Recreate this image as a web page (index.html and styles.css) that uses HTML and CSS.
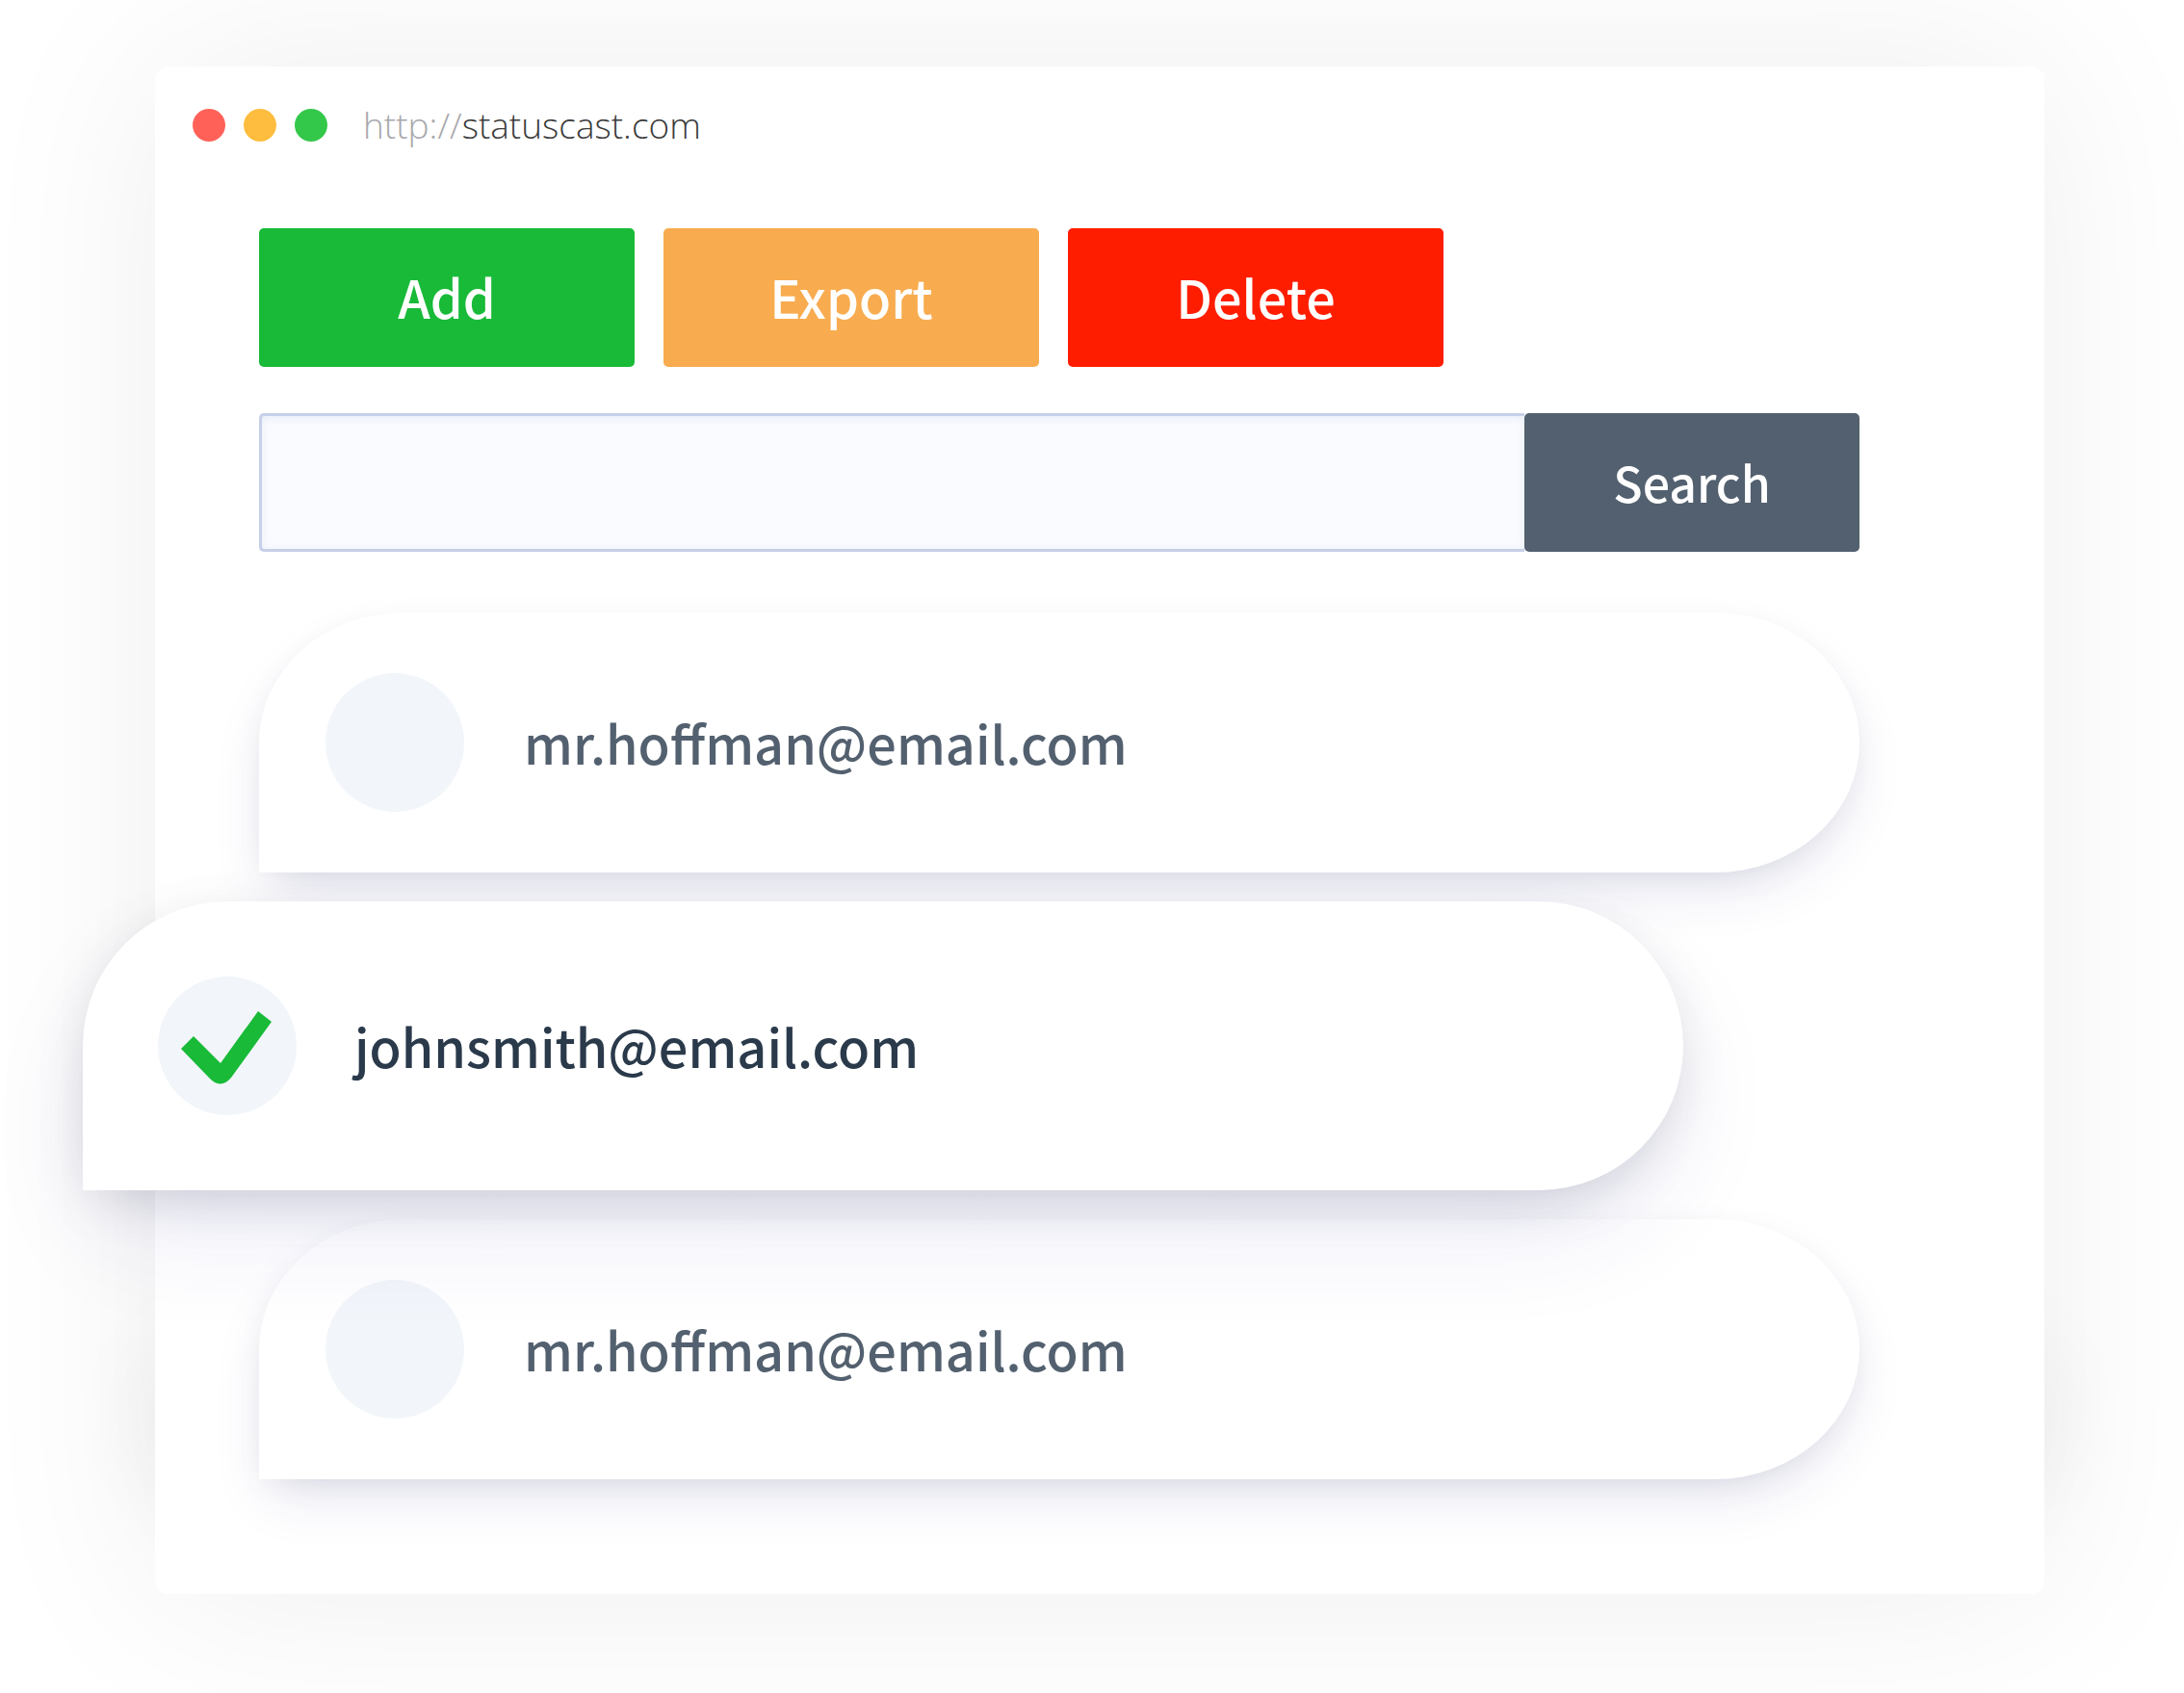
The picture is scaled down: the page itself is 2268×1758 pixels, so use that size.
FILE: index.html
```html
<!DOCTYPE html>
<html lang="en">
<head>
<meta charset="utf-8">
<meta name="viewport" content="width=device-width, initial-scale=1">
<title>StatusCast subscribers</title>
<link rel="stylesheet" href="styles.css">
</head>
<body>
<main class="window">
  <header class="titlebar">
    <span class="dot dot-close"></span>
    <span class="dot dot-minimise"></span>
    <span class="dot dot-expand"></span>
    <a class="address" href="#"><span class="scheme">http://</span>statuscast.com</a>
  </header>
  <div class="content">
    <div class="toolbar">
      <button class="btn btn-add" type="button">Add</button>
      <button class="btn btn-export" type="button">Export</button>
      <button class="btn btn-delete" type="button">Delete</button>
    </div>
    <form class="search">
      <input class="search-field" type="search" aria-label="Search subscribers">
      <button class="btn btn-search" type="button">Search</button>
    </form>
    <div class="list">
      <label class="row">
        <span class="check"><input class="check-box" type="checkbox"></span>
        <span class="email">mr.hoffman@email.com</span>
      </label>
      <label class="row row-active">
        <span class="check">
          <input class="check-box" type="checkbox" checked>
          <svg class="check-mark" viewBox="0 0 144 144" aria-hidden="true"><path d="M24 75L37 62L65 90L104 36L118 47L76 105Q65 118 53 105Z"/></svg>
        </span>
        <span class="email">johnsmith@email.com</span>
      </label>
      <label class="row">
        <span class="check"><input class="check-box" type="checkbox"></span>
        <span class="email">mr.hoffman@email.com</span>
      </label>
    </div>
  </div>
</main>
</body>
</html>
```
FILE: styles.css
```css
* {
  box-sizing: border-box;
}

body {
  margin: 0;
  padding: 69px 145px 103px 161px;
  overflow-x: hidden;
  background: #fff;
  font-family: "Noto Sans CJK KR", "Noto Sans CJK JP", "Noto Sans", sans-serif;
}

.window {
  position: relative;
  border-radius: 14px;
  background: #fff;
  box-shadow: 0 0 200px rgba(0, 0, 0, 0.07);
}

/* soft glow behind the lower edge of the window */
.window::before {
  content: "";
  position: absolute;
  z-index: -1;
  right: 20px;
  bottom: 130px;
  left: 20px;
  height: 110px;
  border-radius: 50px;
  box-shadow: 0 0 110px rgba(50, 50, 93, 0.15);
}

.titlebar {
  display: flex;
  align-items: center;
  gap: 19px;
  padding: 36px 39px;
}

.dot {
  width: 34px;
  height: 34px;
  border-radius: 50%;
}

.dot-close {
  background: #ff6159;
}

.dot-minimise {
  background: #ffbd3f;
}

.dot-expand {
  background: #34c84b;
}

.address {
  margin-left: 18px;
  color: #3c3c3c;
  font-family: "Open Sans", "Noto Sans", sans-serif;
  font-size: 37px;
  font-weight: 300;
  line-height: 50px;
  text-decoration: none;
}

.scheme {
  color: #a8a8ac;
}

.content {
  padding: 46px 192px 119px 108px;
}

.toolbar {
  display: flex;
  gap: 30px;
  margin-bottom: 48px;
}

.btn {
  height: 144px;
  padding: 0 0 2px;
  border: 0;
  border-radius: 5px;
  color: #fff;
  font: inherit;
  font-size: 54px;
  font-weight: 500;
  line-height: 80px;
}

.toolbar .btn {
  width: 390px;
}

.btn-add {
  background: #18ba38;
}

.btn-export {
  background: #f8ac4f;
}

.btn-delete {
  background: #ff1d00;
}

.search {
  display: flex;
  margin-bottom: 63px;
}

.search-field {
  flex: 1;
  min-width: 0;
  height: 144px;
  padding: 0 32px;
  border: 3px solid #c6d0e8;
  border-right: 0;
  border-radius: 5px 0 0 5px;
  background: #fafbff;
  box-shadow: inset 0 2px 10px rgba(90, 130, 170, 0.12);
  font: inherit;
  font-size: 50px;
}

.btn-search {
  width: 348px;
  background: #53606f;
  font-size: 50px;
}

.list {
  display: flex;
  flex-direction: column;
  gap: 30px;
}

.row {
  display: flex;
  align-items: center;
  gap: 62px;
  min-height: 270px;
  padding: 0 69px;
  border-radius: 150px 150px 150px 0 / 50% 50% 50% 0;
  background: #fff;
  box-shadow: 0 26px 60px -12px rgba(50, 50, 150, 0.13), 0 10px 36px -12px rgba(0, 0, 0, 0.1);
  color: #53606f;
}

.row-active {
  position: relative;
  z-index: 1;
  gap: 60px;
  min-height: 300px;
  margin: 0 183px 0 -183px;
  padding: 0 78px;
  box-shadow: 0 50px 120px -20px rgba(50, 50, 180, 0.12), 0 16px 60px -14px rgba(0, 0, 0, 0.18);
  color: #2a3a4b;
}

.check {
  display: grid;
  flex: none;
  width: 144px;
  height: 144px;
}

.check > * {
  grid-area: 1 / 1;
}

.check-box {
  appearance: none;
  width: 100%;
  height: 100%;
  margin: 0;
  border-radius: 50%;
  background: #f2f5fa;
}

.check-mark {
  width: 100%;
  fill: #18ba38;
  pointer-events: none;
}

.email {
  font-size: 54px;
  font-weight: 500;
  line-height: 80px;
}
```
